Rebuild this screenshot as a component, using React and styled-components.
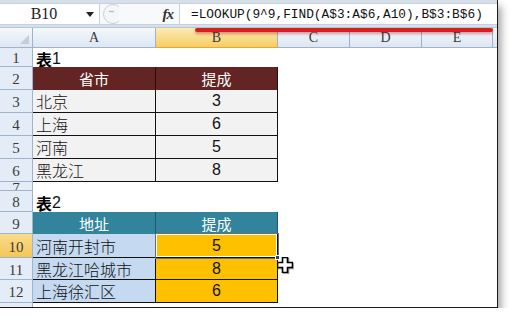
import React from "react";
import styled, { createGlobalStyle } from "styled-components";

const GlobalStyle = createGlobalStyle`
  html, body { margin: 0; padding: 0; background: #fff; }
  * { box-sizing: border-box; }
`;

const COLS = ["A", "B", "C", "D", "E", ""];
const SEL_COL = "B";
const SEL_ROW = 10;

const T1_HEAD = { bg: "#632523", color: "#fff", div: "#2a0d0c" };
const T2_HEAD = { bg: "#31849b", color: "#fff", div: "#1d5868" };

const rows = [
  { n: 1, h: 19, cells: [{ title: "1" }] },
  { n: 2, h: 23, cells: [{ text: "省市", head: T1_HEAD }, { text: "提成", head: T1_HEAD }] },
  { n: 3, h: 23, cells: [{ text: "北京", bg: "#f2f2f2", box: true }, { text: "3", bg: "#f2f2f2", box: true, num: true }] },
  { n: 4, h: 23, cells: [{ text: "上海", bg: "#f2f2f2", box: true }, { text: "6", bg: "#f2f2f2", box: true, num: true }] },
  { n: 5, h: 23, cells: [{ text: "河南", bg: "#f2f2f2", box: true }, { text: "5", bg: "#f2f2f2", box: true, num: true }] },
  { n: 6, h: 23, cells: [{ text: "黑龙江", bg: "#f2f2f2", box: true }, { text: "8", bg: "#f2f2f2", box: true, num: true }] },
  { n: 7, h: 9, cells: [] },
  { n: 8, h: 21, cells: [{ title: "2" }] },
  { n: 9, h: 22, cells: [{ text: "地址", head: T2_HEAD }, { text: "提成", head: T2_HEAD }] },
  { n: 10, h: 24, cells: [{ text: "河南开封市", bg: "#c5d9f1", box: true }, { text: "5", bg: "#ffc000", box: true, num: true, selected: true }] },
  { n: 11, h: 22, cells: [{ text: "黑龙江哈城市", bg: "#c5d9f1", box: true }, { text: "8", bg: "#ffc000", box: true, num: true }] },
  { n: 12, h: 23, cells: [{ text: "上海徐汇区", bg: "#c5d9f1", box: true }, { text: "6", bg: "#ffc000", box: true, num: true }] },
  { n: 13, h: 23, cells: [], hidden: true },
];

export default function App() {
  return (
    <>
      <GlobalStyle />
      <Window>
        <FormulaBar>
          <NameBox>
            <NameText>B10</NameText>
            <DropArrow />
          </NameBox>
          <Middle>
            <Knob width="18" height="22" viewBox="0 0 18 22">
              <circle cx="12" cy="11" r="9.5" fill="#f4f6f9" stroke="#c9d1dc" />
              <path d="M8 8.5h5" stroke="#b4bcc8" strokeWidth="1.4" />
            </Knob>
            <Fx>fx</Fx>
          </Middle>
          <Input>=LOOKUP(9^9,FIND(A$3:A$6,A10),B$3:B$6)</Input>
        </FormulaBar>

        <Sheet $rows={rows.map((r) => r.h)}>
          <Corner />
          {COLS.map((c) => (
            <ColHead key={c || "f"} $active={c === SEL_COL}>
              {c}
            </ColHead>
          ))}
          {rows.map((r) => (
            <React.Fragment key={r.n}>
              <RowHead $active={r.n === SEL_ROW} $short={r.h < 12}>
                {r.hidden ? null : r.n}
              </RowHead>
              {COLS.map((c, i) => {
                const cell = r.cells[i];
                if (!cell) return <Cell key={c || "f"} />;
                if (cell.title)
                  return (
                    <Cell key={c} $title>
                      <b>表</b>
                      {cell.title}
                    </Cell>
                  );
                if (cell.head)
                  return (
                    <Cell
                      key={c}
                      $bg={cell.head.bg}
                      $color={cell.head.color}
                      $right={cell.head.div}
                      $center
                      $head
                    >
                      {cell.text}
                    </Cell>
                  );
                return (
                  <Cell
                    key={c}
                    $bg={cell.bg}
                    $right="#111"
                    $bottom="#111"
                    $center={cell.num}
                    $num={cell.num}
                    $selected={cell.selected}
                  >
                    {cell.text}
                    {cell.selected && <Handle />}
                  </Cell>
                );
              })}
            </React.Fragment>
          ))}
        </Sheet>

        <RedMark />
        <Cursor width="16" height="16" viewBox="0 0 16 16">
          <path
            d="M5.5 0.5h5v5h5v5h-5v5h-5v-5h-5v-5h5z"
            fill="#fff"
            stroke="#000"
            strokeWidth="1.6"
          />
        </Cursor>
      </Window>
    </>
  );
}

const Window = styled.div`
  position: relative;
  width: 498px;
  height: 308px;
  display: flex;
  flex-direction: column;
  overflow: hidden;
  border-right: 1px solid #1a1a1a;
  border-bottom: 1px solid #1a1a1a;
  background: #fff;
  box-shadow: 3px 6px 8px rgba(0, 0, 0, 0.38);
`;

const FormulaBar = styled.div`
  display: flex;
  height: 28px;
  flex: none;
  padding: 3px 0 2px;
  background: #d6dfea;
  border-bottom: 1px solid #b9c6d6;
`;

const NameBox = styled.div`
  width: 100px;
  display: flex;
  align-items: center;
  background: #fff;
  border: 1px solid #c7d1dd;
  border-left: none;
`;

const NameText = styled.span`
  flex: 1;
  text-align: center;
  padding-left: 2px;
  font-family: "Liberation Serif", serif;
  font-size: 16px;
  color: #222;
`;

const DropArrow = styled.span`
  width: 0;
  height: 0;
  margin-right: 5px;
  border-left: 4px solid transparent;
  border-right: 4px solid transparent;
  border-top: 5px solid #222;
`;

const Middle = styled.div`
  width: 79px;
  display: flex;
  align-items: center;
  justify-content: space-between;
  background: #f8f9fb;
  border-top: 1px solid #c7d1dd;
  border-bottom: 1px solid #c7d1dd;
  padding-right: 6px;
`;

const Knob = styled.svg`
  display: block;
  margin-left: 1px;
`;

const Fx = styled.span`
  font-family: "Liberation Serif", serif;
  font-style: italic;
  font-weight: bold;
  font-size: 15px;
  color: #333;
  letter-spacing: -1px;
`;

const Input = styled.div`
  flex: 1;
  display: flex;
  align-items: center;
  padding-left: 11px;
  background: #fff;
  border: 1px solid #c7d1dd;
  border-right: none;
  font-family: "Liberation Mono", monospace;
  font-size: 12.8px;
  color: #111;
  white-space: nowrap;
  overflow: hidden;
`;

const Sheet = styled.div`
  flex: 1;
  display: grid;
  grid-template-columns: 33px 123px 122px 72px 72px 71px 1fr;
  grid-template-rows: 20px ${(p) => p.$rows.map((h) => `${h}px`).join(" ")};
  overflow: hidden;
`;

const headerBg = "linear-gradient(#f5f8fc, #dde6f2)";
const activeBg = "linear-gradient(#fcebb6, #f6cd62)";

const Corner = styled.div`
  position: relative;
  background: ${headerBg};
  border-right: 1px solid #9fb3cb;
  border-bottom: 1px solid #9fb3cb;
  &::after {
    content: "";
    position: absolute;
    right: 3px;
    bottom: 3px;
    border-left: 9px solid transparent;
    border-bottom: 9px solid #c3ccd8;
  }
`;

const ColHead = styled.div`
  display: flex;
  align-items: center;
  justify-content: center;
  background: ${(p) => (p.$active ? activeBg : headerBg)};
  border-right: 1px solid #9fb3cb;
  border-bottom: 1px solid ${(p) => (p.$active ? "#e2a93a" : "#9fb3cb")};
  font-family: "Liberation Serif", serif;
  font-size: 14px;
  color: #3b3b3b;
`;

const RowHead = styled.div`
  display: flex;
  align-items: ${(p) => (p.$short ? "flex-start" : "center")};
  justify-content: center;
  overflow: hidden;
  line-height: ${(p) => (p.$short ? "8px" : "normal")};
  padding-top: ${(p) => (p.$short ? "2px" : "3px")};
  background: ${(p) => (p.$active ? "linear-gradient(#f9dc8c, #f4c656)" : "#e4ecf7")};
  border-right: 1px solid #9fb3cb;
  border-bottom: 1px solid #9fb3cb;
  font-family: "Liberation Serif", serif;
  font-size: 15px;
  color: #3b3b3b;
`;

const Cell = styled.div`
  position: relative;
  display: flex;
  align-items: center;
  justify-content: ${(p) => (p.$center ? "center" : "flex-start")};
  padding: ${(p) => (p.$title ? "2px 3px 0" : "0 3px")};
  background: ${(p) => p.$bg || "#fff"};
  color: ${(p) => p.$color || "#111"};
  border-right: ${(p) => (p.$right ? `1px solid ${p.$right}` : "none")};
  border-bottom: ${(p) => (p.$bottom ? `1px solid ${p.$bottom}` : "none")};
  font-family: ${(p) =>
    p.$num ? '"Liberation Sans", sans-serif' : '"Liberation Sans", "Noto Sans CJK SC", sans-serif'};
  font-size: ${(p) => (p.$head ? "15px" : "16px")};
  font-weight: ${(p) => (p.$num || p.$title || p.$head ? 400 : 300)};
  white-space: nowrap;
  overflow: visible;
  box-shadow: ${(p) => (p.$selected ? "inset 0 0 0 1px #fff, 0 0 0 1px #6d6d6d" : "none")};
  z-index: ${(p) => (p.$selected ? 1 : 0)};
  b {
    font-weight: bold;
    color: #000;
  }
`;

const Handle = styled.span`
  position: absolute;
  right: -3px;
  bottom: -3px;
  width: 5px;
  height: 5px;
  background: #30405a;
  border: 1px solid #fff;
`;

const RedMark = styled.div`
  position: absolute;
  left: 195px;
  top: 28px;
  width: 298px;
  height: 4px;
  border-radius: 2px;
  background: #d81e1e;
  box-shadow: 0 2px 3px rgba(120, 0, 0, 0.35);
`;

const Cursor = styled.svg`
  position: absolute;
  left: 277px;
  top: 257px;
  z-index: 2;
  filter: drop-shadow(1px 1px 0 rgba(0, 0, 0, 0.4));
`;
